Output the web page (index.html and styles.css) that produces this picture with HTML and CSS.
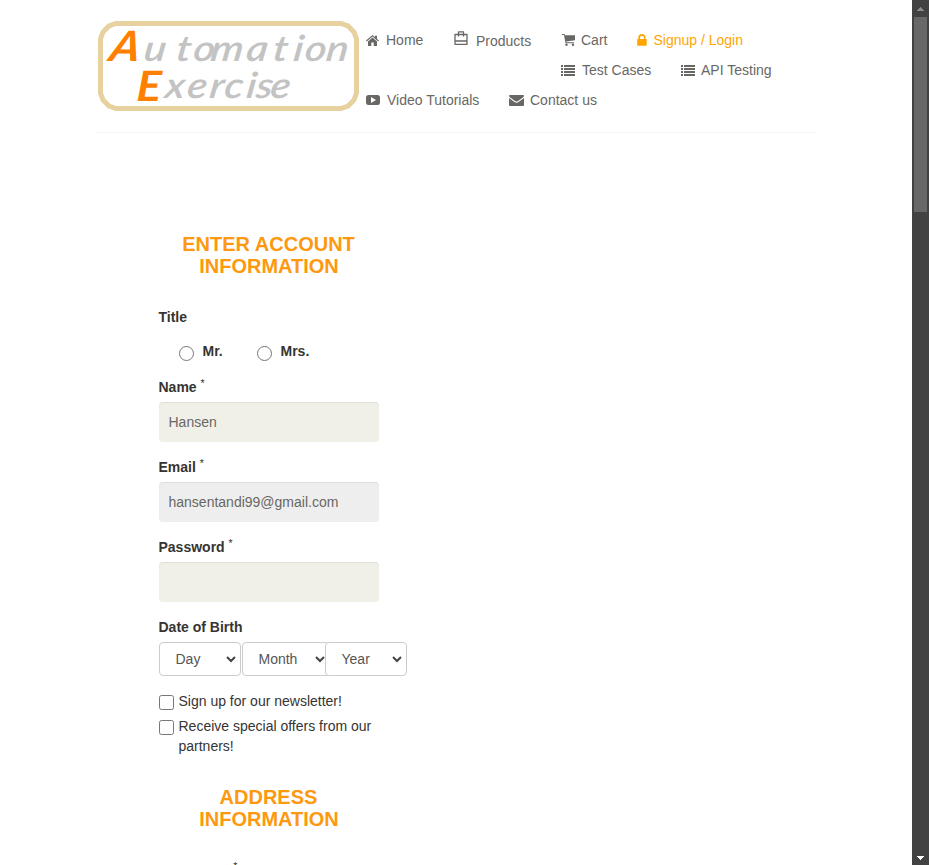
FILE: index.html
```html
<!DOCTYPE html>
<html lang="en">
<head>
<meta charset="utf-8">
<title>Automation Exercise - Signup</title>
<link rel="stylesheet" href="styles.css">
</head>
<body>
<svg width="0" height="0" class="defs">
  <symbol id="list" viewBox="0 0 14 11"><path d="M0 0h2v2H0zM3 0h11v2H3zM0 3h2v2H0zM3 3h11v2H3zM0 6h2v2H0zM3 6h11v2H3zM0 9h2v2H0zM3 9h11v2H3z"/></symbol>
</svg>
<div class="page">
  <header class="header">
    <a class="logo">
      <svg width="261" height="90" viewBox="0 0 261 90">
        <path class="frame" d="M18 2.500H243L250 5L256 11L258.500 18V72L256 79L250 85L243 87.500H18L11 85L5 79L2.500 72V18L5 11L11 5Z"/>
        <text class="word" transform="translate(0 40) skewX(-8) scale(1.150 1)" x="39 67 82 97 128 151 169 179 197.500">utomation</text>
        <text class="word" transform="translate(0 77) skewX(-8) scale(1.150 1)" x="57.500 76.500 96 109 128 136.500 149">xercise</text>
        <text class="initial" transform="translate(10 40) skewX(-12) scale(1.100 1)">A</text>
        <text class="initial" transform="translate(38 80) skewX(-3) scale(1.100 1)">E</text>
      </svg>
    </a>
    <nav class="nav">
      <ul>
        <li class="home"><svg class="icon" width="13" height="11" viewBox="0 0 13 11"><path d="M6.500 0 9 2.200V.7h2v3.200l2 1.700-.8.900L6.500 1.500.8 6.500 0 5.600zM6.500 2.500 11 6.400V11H7.700V7.600H5.300V11H2V6.400z"/></svg>Home</li>
        <li class="products"><svg class="icon bag" width="14" height="14" viewBox="0 0 14 14"><path d="M1 3.500h12v9.800H1zM1 10h12M4.500 5.600V.8h5v4.800" fill="none" stroke="currentColor" stroke-width="1.300" stroke-linejoin="round"/></svg>Products</li>
        <li class="cart"><svg class="icon" width="13" height="12" viewBox="0 0 13 12"><path d="M0 0h2.600L3 1.200h10v5L4.200 7.400l.2.900H12v1H3.500L2 1H0z"/><circle cx="4.500" cy="10.700" r="1.200"/><circle cx="11" cy="10.700" r="1.200"/></svg>Cart</li>
        <li class="login"><svg class="icon" width="10" height="12" viewBox="0 0 10 12"><path fill-rule="evenodd" d="M1.300 5V3.700a3.600 3.600 0 0 1 7.200 0V5h.6q.6 0 .6.600v5.500q0 .6-.6.600H.8q-.6 0-.6-.6V5.600Q.2 5 .8 5zM3 5h3.900V3.700a1.950 1.950 0 0 0-3.900 0z"/></svg>Signup / Login</li>
      </ul>
      <ul class="second">
        <li class="cases"><svg class="icon" width="14" height="11"><use href="#list"/></svg>Test Cases</li>
        <li class="api"><svg class="icon" width="14" height="11"><use href="#list"/></svg>API Testing</li>
      </ul>
      <ul>
        <li class="video"><svg class="icon" width="14" height="10" viewBox="0 0 14 10"><path fill-rule="evenodd" d="M2.500 0h9Q14 0 14 2.500v5Q14 10 11.500 10h-9Q0 10 0 7.500v-5Q0 0 2.500 0zM5 2v6l5-3z"/></svg>Video Tutorials</li>
        <li class="contact"><svg class="icon" width="15" height="11" viewBox="0 0 15 11"><path d="M1 0h13q1 0 1 1-.4 1-1.500 1.800L9 6Q7.500 7 6 6L1.500 2.800Q.4 2 0 1 0 0 1 0zM0 3l5.500 4q2 1.300 4 0L15 3v7q0 1-1 1H1q-1 0-1-1z"/></svg>Contact us</li>
      </ul>
    </nav>
  </header>
  <main class="form">
    <h2>Enter Account<br>Information</h2>
    <span class="label title-label">Title</span>
    <div class="radios">
      <label><input type="radio" name="title">Mr.</label>
      <label><input type="radio" name="title">Mrs.</label>
    </div>
    <div class="group"><label class="label">Name <sup>*</sup></label><input class="field" type="text" value="Hansen"></div>
    <div class="group"><label class="label">Email <sup>*</sup></label><input class="field readonly" type="text" value="hansentandi99@gmail.com" readonly></div>
    <div class="group"><label class="label">Password <sup>*</sup></label><input class="field" type="password"></div>
    <span class="label">Date of Birth</span>
    <div class="dates">
      <div class="select day"><span>Day</span><svg width="10" height="7" viewBox="0 0 10 7"><path d="M1 1l4 4 4-4"/></svg></div>
      <div class="select month"><span>Month</span><svg width="10" height="7" viewBox="0 0 10 7"><path d="M1 1l4 4 4-4"/></svg></div>
      <div class="select year"><span>Year</span><svg width="10" height="7" viewBox="0 0 10 7"><path d="M1 1l4 4 4-4"/></svg></div>
    </div>
    <label class="check"><input type="checkbox"><span>Sign up for our newsletter!</span></label>
    <label class="check"><input type="checkbox"><span>Receive special offers from our partners!</span></label>
    <h2 class="address">Address<br>Information</h2>
    <label class="label first-name">First name <sup>*</sup></label>
  </main>
</div>
<aside class="scrollbar">
  <svg width="7" height="4" viewBox="0 0 7 4" shape-rendering="crispEdges"><path fill="#8b8b8b" d="M3 0h1v1h1v1h1v1h1v1H0V3h1V2h1V1h1z"/></svg>
  <div class="thumb"></div>
  <svg class="down" width="7" height="4" viewBox="0 0 7 4" shape-rendering="crispEdges"><path fill="#fff" d="M0 0h7v1H6v1H5v1H4v1H3V3H2V2H1V1H0z"/></svg>
</aside>
</body>
</html>
```

FILE: styles.css
```css
* { box-sizing: border-box; }
body {
  margin: 0;
  height: 865px;
  overflow: hidden;
  display: flex;
  background: #fff;
  color: #363432;
  font: 14px/20px "Liberation Sans", Arial, sans-serif;
}
.defs { position: absolute; }
.page { width: 912px; height: 865px; overflow: hidden; }
.header {
  display: flex;
  width: 720px;
  height: 133px;
  margin-left: 96px;
  padding: 21px 0 0 2px;
  border-bottom: 1px solid #f5f5f5;
}
.logo { width: 268px; }
.logo svg { display: block; }
.frame { fill: #fff; stroke: #e6d19f; stroke-width: 5; }
.word { fill: #c3c3c3; font: italic 600 36px Lato, sans-serif; }
.initial { fill: #ff8000; font: italic 700 42px Lato, sans-serif; }
.nav { padding-top: 9px; color: #696763; }
.nav ul { display: flex; height: 30px; margin: 0; padding: 0; list-style: none; }
.nav .second { margin-left: 195px; }
.nav li { display: flex; align-items: center; height: 20px; white-space: nowrap; }
.icon { fill: currentColor; flex: none; }
.home { width: 88px; }
.home .icon { margin-right: 7px; }
.products { width: 108px; padding-top: 2px; }
.products .icon { margin: -6px 8px 0 0; }
.cart { width: 75px; }
.cart .icon { margin-right: 6px; }
.login { color: #ffa500; }
.login .icon { margin-right: 6.500px; }
.cases { width: 120px; }
.cases .icon { margin-right: 7px; }
.api .icon { margin-right: 6px; }
.video { width: 143px; }
.video .icon { margin-right: 7px; }
.contact .icon { margin-right: 6px; }

.form { width: 220px; margin: 100px 0 0 159px; }
h2 {
  margin: 0 0 30px;
  color: #fe980f;
  font-size: 20px;
  line-height: 22px;
  text-align: center;
  text-indent: -1px;
  text-transform: uppercase;
}
.label { display: block; height: 20px; margin-bottom: 5px; font-weight: 700; text-indent: -.5px; }
sup { position: relative; top: -5px; font-size: 10.500px; font-weight: 400; line-height: 0; vertical-align: baseline; }
.title-label { margin-bottom: 14px; }
.radios { display: flex; height: 36px; padding-left: 20px; font-weight: 700; }
.radios label { display: flex; width: 78px; }
input[type="radio"], input[type="checkbox"] {
  appearance: none;
  flex: none;
  width: 15px;
  height: 15px;
  background: #fff;
  border: 1px solid #767676;
}
input[type="radio"] { margin: 5px 8.500px 0 0; border-radius: 50%; }
.group { height: 80px; }
.field {
  display: block;
  width: 220px;
  height: 40px;
  padding: 0 9.500px;
  background: #f0f0e9;
  color: #696763;
  border: 0;
  border-radius: 4px;
  box-shadow: inset 0 1px 1px rgba(0, 0, 0, .075);
  font: inherit;
}
.readonly { background: #eee; }
.dates { display: flex; width: 248px; }
.select {
  display: flex;
  align-items: center;
  justify-content: space-between;
  flex: none;
  width: 82px;
  height: 34px;
  padding: 0 4px 0 15.500px;
  border: 1px solid #ccc;
  border-radius: 4px;
  background: #fff;
  color: #555;
}
.select svg { fill: none; stroke: #444; stroke-width: 2; }
.month { width: 88px; margin-left: 1px; }
.year { z-index: 1; margin-left: -5px; }
.check { display: flex; margin-bottom: 5px; }
.dates + .check { margin-top: 15px; }
.check input { margin: 4px 4.500px 0 0; border-radius: 2.500px; }
.address { margin: 30px 0 32px; }
.first-name { white-space: nowrap; }
.first-name sup { top: -7px; }

.scrollbar {
  display: flex;
  flex-direction: column;
  align-items: center;
  width: 17px;
  height: 865px;
  padding: 7px 0 5px;
  background: #424242;
}
.thumb { width: 13px; height: 195px; margin-top: 6px; background: #686868; }
.down { margin-top: auto; }
```
